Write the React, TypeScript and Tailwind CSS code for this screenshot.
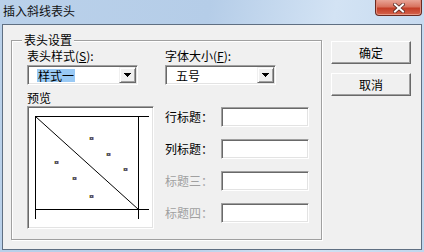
import React from "react";

const sunken =
  "border border-t-[#a0a0a0] border-l-[#a0a0a0] border-r-white border-b-white shadow-[inset_1px_1px_0_#696969,inset_-1px_-1px_0_#e3e3e3]";
const raised =
  "border border-t-white border-l-white border-r-[#696969] border-b-[#696969] shadow-[inset_-1px_-1px_0_#a0a0a0,inset_1px_1px_0_#f0f0f0]";

function Arrow() {
  return (
    <svg width="7" height="4" viewBox="0 0 7 4" shapeRendering="crispEdges">
      <rect x="0" y="0" width="7" height="1" fill="#000" />
      <rect x="1" y="1" width="5" height="1" fill="#000" />
      <rect x="2" y="2" width="3" height="1" fill="#000" />
      <rect x="3" y="3" width="1" height="1" fill="#000" />
    </svg>
  );
}

function Combo({ text, selected }: { text: string; selected?: boolean }) {
  return (
    <div className={`w-[111px] h-[20px] flex bg-white p-[1px] ${sunken}`}>
      <div className="flex-1 flex items-center pl-[8px]">
        <span className={selected ? "bg-[#99c9f4] px-[1px] leading-[13px]" : "px-[1px] leading-[13px]"}>{text}</span>
      </div>
      <div
        className={`w-[17px] h-full bg-[#f0f0f0] flex items-center justify-center border border-t-[#f0f0f0] border-l-[#f0f0f0] border-r-[#696969] border-b-[#696969] shadow-[inset_1px_1px_0_#fff,inset_-1px_-1px_0_#a0a0a0]`}
      >
        <Arrow />
      </div>
    </div>
  );
}

function Row({ label, disabled }: { label: string; disabled?: boolean }) {
  return (
    <div className="flex items-center h-[20px]">
      <span className={`w-[56px] ${disabled ? "text-[#a0a0a0]" : "text-black"}`}>{label}</span>
      <div className={`w-[88px] h-[20px] bg-white ${sunken}`} />
    </div>
  );
}

function Dot({ x, y }: { x: number; y: number }) {
  return (
    <g shapeRendering="crispEdges">
      <rect x={x - 2} y={y - 1} width="1" height="3" fill="#e2bf62" />
      <rect x={x - 1} y={y - 1} width="3" height="3" fill="#56566a" />
      <rect x={x} y={y} width="1" height="1" fill="#a8a8b8" />
      <rect x={x + 2} y={y - 1} width="1" height="3" fill="#8fa3d8" />
    </g>
  );
}

export default function App() {
  return (
    <div className="w-[424px] h-[252px] flex flex-col overflow-hidden bg-[linear-gradient(100deg,#bad1ea_0%,#b5cde8_45%,#d3e3f4_72%,#c1d6ed_100%)] font-['Noto_Sans_CJK_SC',sans-serif] text-[12px] leading-[14px] text-black">
      {/* title bar */}
      <div className="h-[24px] flex items-start shrink-0">
        <span className="ml-[3px] mt-[4px] text-[#111]">插入斜线表头</span>
        <div className="flex-1" />
        <div className="mr-[2px] w-[47px] h-[16px] rounded-b-[4px] border border-t-0 border-[#6a2a20] bg-[linear-gradient(#e9a496,#d8735f_45%,#c43e27_55%,#d5644d)] shadow-[inset_0_-1px_0_#e79a88,inset_1px_0_0_#e08878,inset_-1px_0_0_#e08878] flex items-center justify-center">
          <svg width="12" height="10" viewBox="0 0 12 10">
            <path d="M2 1.5L10 8.5M10 1.5L2 8.5" stroke="#5a2a24" strokeWidth="3.6" strokeLinecap="square" />
            <path d="M2 1.5L10 8.5M10 1.5L2 8.5" stroke="#fff" strokeWidth="2" strokeLinecap="square" />
          </svg>
        </div>
      </div>

      {/* client area */}
      <div className="mx-[2px] h-[226px] shrink-0 border border-[#5f6f82] bg-[#f0f0f0] flex items-start pl-[8px] pt-[15px]">
        {/* group box */}
        <div className="relative w-[311px] h-[200px] border border-[#a0a0a0] shadow-[1px_1px_0_#fff,inset_1px_1px_0_#fff] flex pl-[15px] pt-[8px]">
          <span className="absolute left-[10px] -top-[8px] px-[2px] bg-[#f0f0f0]">表头设置</span>

          <div className="flex flex-col w-[127px]">
            <span className="h-[14px]">
              表头样式(<span className="underline">S</span>):
            </span>
            <div className="mt-[2px]">
              <Combo text="样式一" selected />
            </div>
            <span className="mt-[6px] h-[14px]">预览</span>
            <div className={`mt-[1px] w-[127px] h-[123px] bg-white p-[1px] ${sunken}`}>
              <svg width="123" height="119" viewBox="0 0 123 119" className="block">
                <g stroke="#000" strokeWidth="1" shapeRendering="crispEdges">
                  <line x1="6" y1="8.5" x2="120" y2="8.5" />
                  <line x1="6" y1="101.5" x2="120" y2="101.5" />
                  <line x1="6.5" y1="8" x2="6.5" y2="111" />
                  <line x1="109.5" y1="8" x2="109.5" y2="111" />
                </g>
                <line x1="6.5" y1="8.5" x2="109.5" y2="101.5" stroke="#000" strokeWidth="1" />
                <Dot x={62} y={30} />
                <Dot x={79} y={46} />
                <Dot x={96} y={61} />
                <Dot x={27} y={54} />
                <Dot x={45} y={70} />
                <Dot x={62} y={88} />
              </svg>
            </div>
          </div>

          <div className="ml-[11px] flex flex-col">
            <span className="h-[14px]">
              字体大小(<span className="underline">F</span>):
            </span>
            <div className="mt-[2px]">
              <Combo text="五号" />
            </div>
            <div className="mt-[22px] flex flex-col gap-[12px]">
              <Row label="行标题：" />
              <Row label="列标题：" />
              <Row label="标题三：" disabled />
              <Row label="标题四：" disabled />
            </div>
          </div>
        </div>

        {/* buttons */}
        <div className="ml-[9px] mt-[1px] flex flex-col gap-[9px]">
          <button className={`w-[80px] h-[23px] flex items-center justify-center bg-[#f0f0f0] text-[12px] ${raised}`}>确定</button>
          <button className={`w-[80px] h-[23px] flex items-center justify-center bg-[#f0f0f0] text-[12px] ${raised}`}>取消</button>
        </div>
      </div>
    </div>
  );
}
